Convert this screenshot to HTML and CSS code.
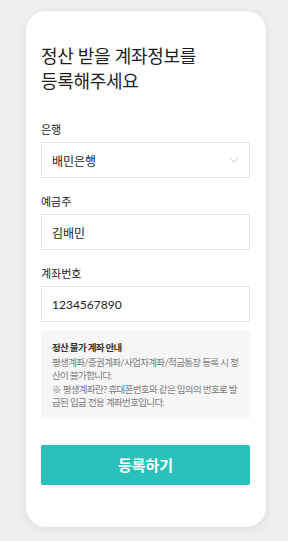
FILE: index.html
```html
<!DOCTYPE html>
<html lang="ko">
<head>
  <meta charset="UTF-8">
  <meta name="viewport" content="width=device-width, initial-scale=1.0">
  <title>정산 계좌 등록</title>
  <link rel="stylesheet" href="styles.css">
</head>
<body>
  <div class="card">
    <h1 class="title">정산 받을 계좌정보를<br>등록해주세요</h1>

    <div class="field">
      <div class="label">은행</div>
      <div class="box select">
        <span>배민은행</span>
        <svg class="chevron" width="10" height="6" viewBox="0 0 10 6">
          <path d="M1 1 L5 5 L9 1" fill="none" stroke="#c8c8c8" stroke-width="1"/>
        </svg>
      </div>
    </div>

    <div class="field">
      <div class="label">예금주</div>
      <div class="box">김배민</div>
    </div>

    <div class="field">
      <div class="label">계좌번호</div>
      <div class="box">1234567890</div>
    </div>

    <div class="notice">
      <div class="notice-title">정산 불가 계좌 안내</div>
      <div class="notice-text">평생계좌/증권계좌/사업자계좌/적금통장 등록 시 정산이 불가합니다.</div>
      <div class="notice-text">※ 평생계좌란? 휴대폰번호와 같은 임의의 번호로 발급된 입금 전용 계좌번호입니다.</div>
    </div>

    <button class="submit">등록하기</button>
  </div>
</body>
</html>
```

FILE: styles.css
```css
body {
  margin: 0;
  padding: 11px 22px 14px 26px;
  background: #efefef;
  font-family: Lato, "Noto Sans CJK KR", "Noto Sans", sans-serif;
  color: #222;
}

.card {
  width: 240px;
  height: 516px;
  box-sizing: border-box;
  background: white;
  border-radius: 20px;
  box-shadow: 0 2px 10px rgba(0, 0, 0, 0.08);
  padding: 33px 16px 0 15px;
}

.title {
  margin: 0 0 28px;
  font-size: 18px;
  font-weight: 400;
  line-height: 25px;
  letter-spacing: -0.3px;
  color: #1e1e1e;
}

.field {
  margin-bottom: 16px;
}

.label {
  font-size: 11px;
  line-height: 16px;
  margin-bottom: 4px;
  color: #222;
}

.box {
  height: 36px;
  box-sizing: border-box;
  border: 1px solid #e4e4e4;
  padding: 0 10px;
  display: flex;
  align-items: center;
  font-size: 12px;
  color: #222;
}

.select {
  justify-content: space-between;
}

.notice {
  background: #f6f6f6;
  margin-top: -7px;
  padding: 10px 9px 8px 11px;
  font-size: 9.5px;
  line-height: 13.5px;
  letter-spacing: -0.65px;
}

.notice-title {
  font-weight: 700;
  color: #333;
  margin-bottom: 1px;
}

.notice-text {
  color: #7b7b7b;
}

.submit {
  display: block;
  width: 100%;
  height: 40px;
  margin-top: 27px;
  border: none;
  border-radius: 2px;
  background: #2bc1bb;
  color: white;
  font-family: inherit;
  font-size: 15px;
  font-weight: 700;
}
```
